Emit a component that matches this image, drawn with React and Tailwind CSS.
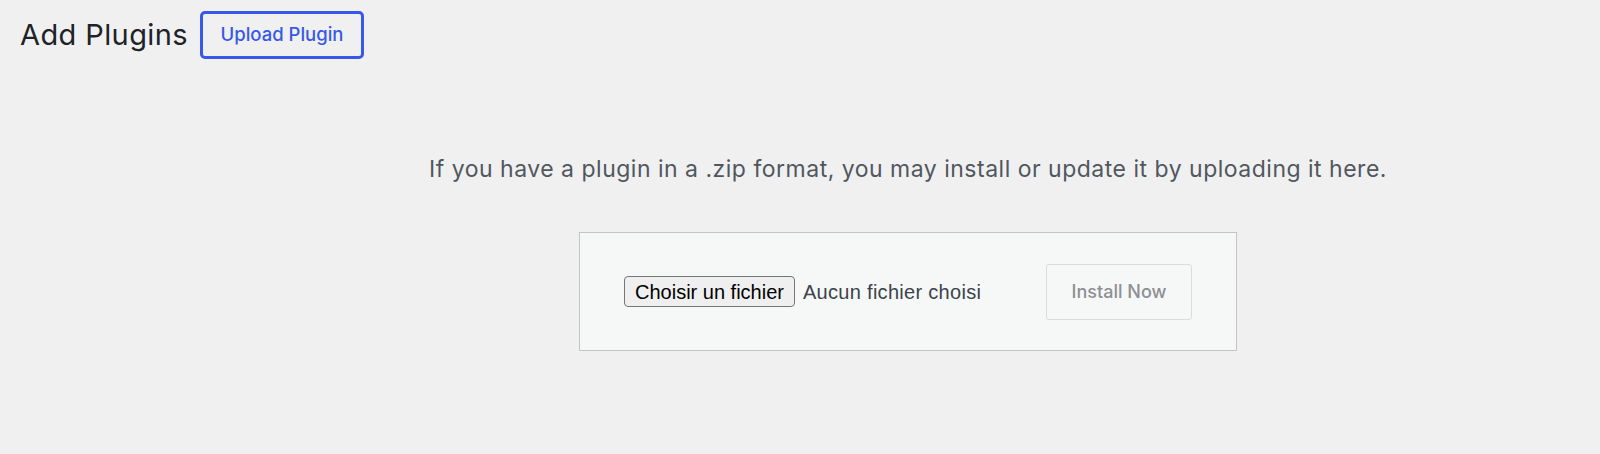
export default function App() {
  return (
    <div className="min-h-[454px] bg-[#f0f0f1] font-['Inter',sans-serif]">
      <div className="flex items-center gap-3 pl-5 pt-[11px]">
        <h1 className="text-[29px] leading-[36px] font-normal tracking-[0.4px] text-[#1d2327]">Add Plugins</h1>
        <button className="h-12 w-[164px] rounded-[5px] border-[3px] border-[#3858e9] bg-transparent text-[18.5px] font-medium text-[#3858e9]">
          Upload Plugin
        </button>
      </div>
      <div className="flex flex-col items-center pl-[216px]">
        <p className="mt-[95px] text-[23px] leading-[30px] tracking-[0.5px] text-[#50575e]">
          If you have a plugin in a .zip format, you may install or update it by uploading it here.
        </p>
        <div className="mt-[48px] flex h-[119px] w-[658px] items-center justify-between border border-[#c3c4c7] bg-[#f6f7f7] px-[44px]">
          <div className="flex items-center gap-2">
            <span className="flex h-[31px] items-center rounded-[4px] border border-[#767676] bg-[#efefef] px-[10px] font-['Liberation_Sans',Arial,sans-serif] text-[20px] text-black">
              Choisir un fichier
            </span>
            <span className="font-['Liberation_Sans',Arial,sans-serif] text-[20px] text-[#3c434a] tracking-[0.3px]">
              Aucun fichier choisi
            </span>
          </div>
          <button className="h-[56px] w-[146px] rounded-[3px] border border-[#dcdcde] bg-[#f6f7f7] text-[18px] font-medium text-[#8c8f94]">
            Install Now
          </button>
        </div>
      </div>
    </div>
  );
}
